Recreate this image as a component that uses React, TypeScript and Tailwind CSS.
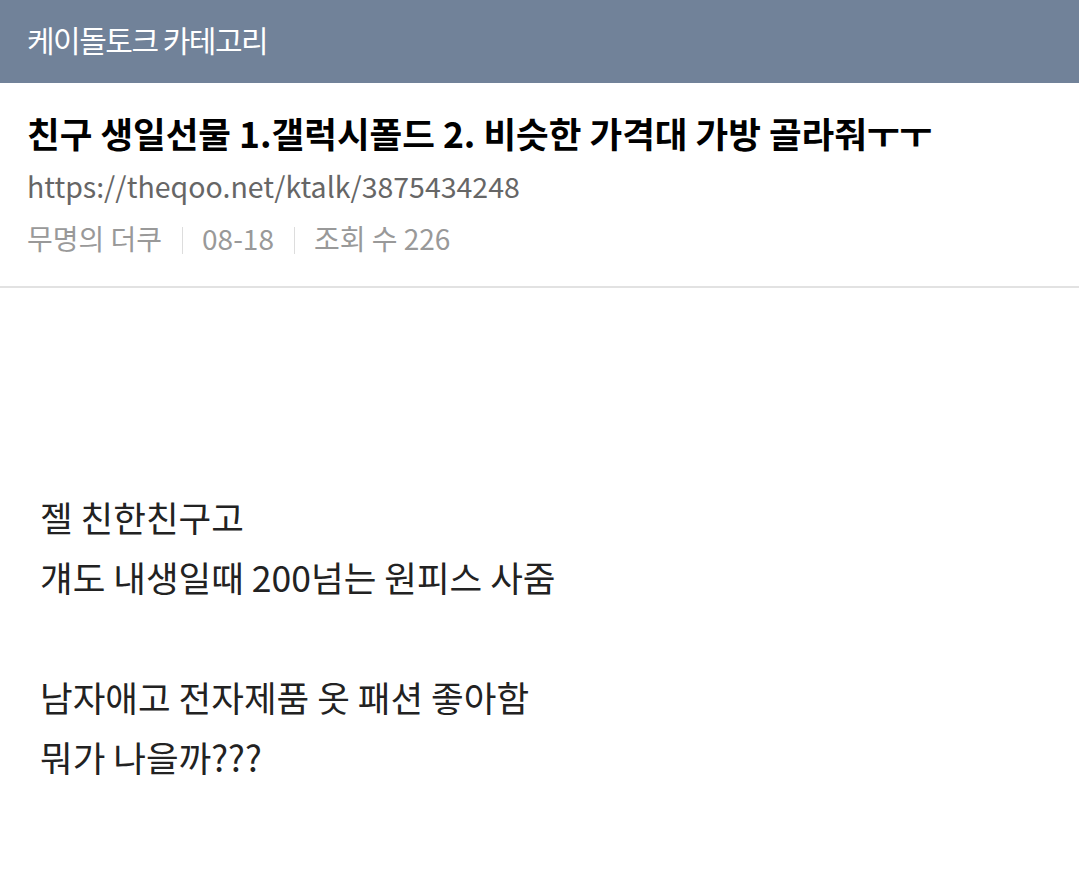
export default function App() {
  const ko = { fontFamily: '"Noto Sans CJK KR", "Noto Sans", sans-serif' };
  return (
    <div className="w-[1079px] min-h-[889px] bg-white" style={ko}>
      <div className="h-[83px] bg-[#718299] flex items-center px-[27px] pb-[6px]">
        <span className="text-white text-[30px] tracking-[-1.5px] leading-none">케이돌토크 카테고리</span>
      </div>
      <div className="px-[27px] pt-[26px] pb-[25px] border-b-2 border-[#e2e2e2]">
        <h1 className="text-[35.5px] font-bold text-black leading-[48px]">
          친구 생일선물 1.갤럭시폴드 2. 비슷한 가격대 가방 골라줘ㅜㅜ
        </h1>
        <div className="text-[28.5px] text-[#666] leading-[58px]">https://theqoo.net/ktalk/3875434248</div>
        <div className="text-[28px] text-[#999] leading-[46px] flex items-center">
          <span>무명의 더쿠</span>
          <span className="w-px h-[27px] bg-[#ddd] ml-[20px] mr-[19px] mt-[4px]" />
          <span>08-18</span>
          <span className="w-px h-[27px] bg-[#ddd] ml-[20px] mr-[19px] mt-[4px]" />
          <span>조회 수 226</span>
        </div>
      </div>
      <div className="px-[40px] pt-[199px] text-[35.5px] text-[#222] leading-[60px]">
        <p>젤 친한친구고</p>
        <p>걔도 내생일때 200넘는 원피스 사줌</p>
        <p>&nbsp;</p>
        <p>남자애고 전자제품 옷 패션 좋아함</p>
        <p>뭐가 나을까???</p>
      </div>
    </div>
  );
}
